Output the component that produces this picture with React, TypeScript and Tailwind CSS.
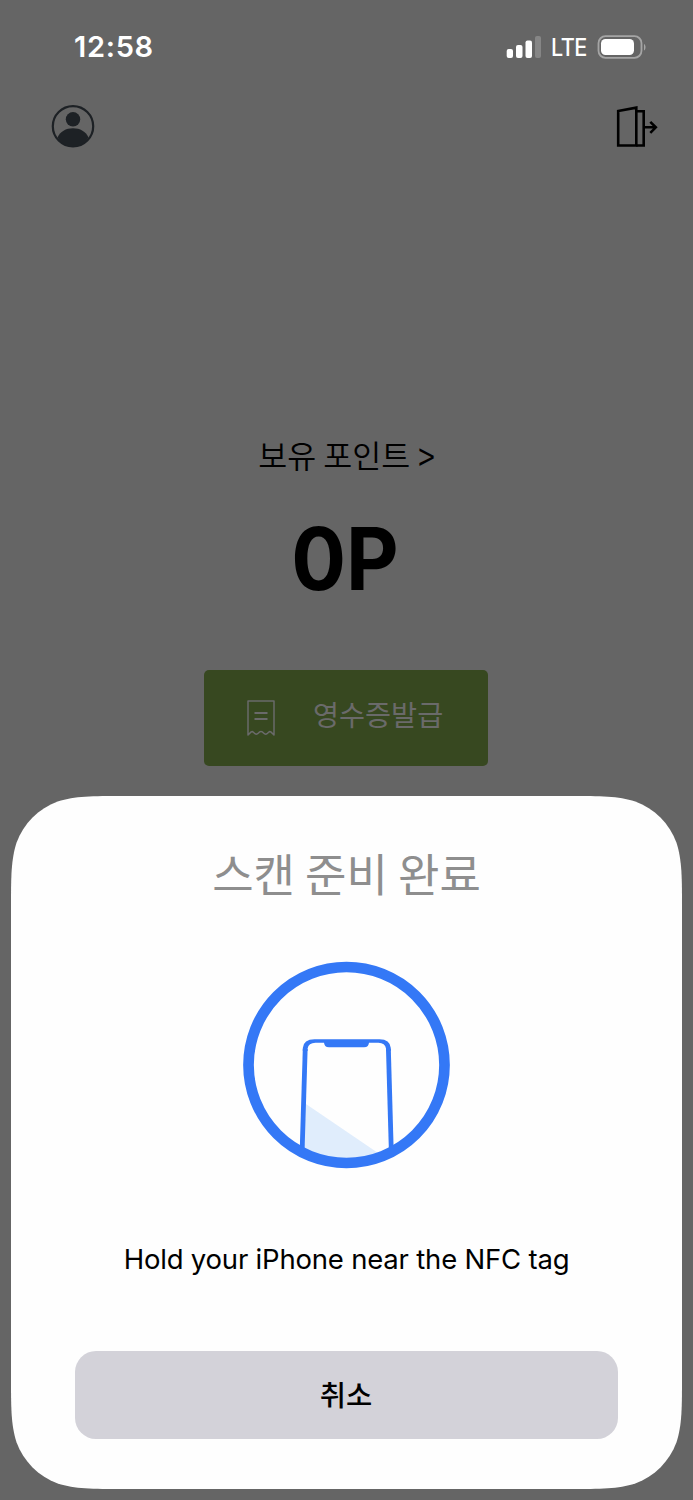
function StatusBar() {
  return (
    <header className="flex h-[93px] items-start justify-between pt-[32px] pl-[74px] pr-[47px] text-white">
      <span className="font-['Inter'] text-[29px] leading-[30px] font-semibold tracking-[0.7px]">12:58</span>
      <div className="flex h-[30px] items-center">
        <svg className="h-[24px] w-[36px]" viewBox="0 0 36 24" fill="currentColor">
          <rect x="0.700" y="14" width="6.300" height="9" rx="2" />
          <rect x="10" y="10" width="6.500" height="13" rx="2" />
          <rect x="19.500" y="5.500" width="6.500" height="17.500" rx="2" />
          <rect x="29" y="1" width="6" height="22" rx="2" opacity="0.220" />
        </svg>
        <span className="ml-[9px] w-[46px] origin-left scale-x-[0.9] pt-px font-['Inter'] text-[24px] leading-[30px] font-medium tracking-[-0.6px]">
          LTE
        </span>
        <svg className="h-[24px] w-[49px]" viewBox="0 0 49 24" fill="none">
          <rect x="1.500" y="1.200" width="43" height="21.600" rx="7" stroke="#a5a5a5" strokeWidth="1.800" />
          <rect x="4" y="4" width="33" height="16" rx="4.500" fill="#fff" />
          <path d="M47 9c2 .8 2 5.600 0 6.400z" fill="#a5a5a5" />
        </svg>
      </div>
    </header>
  );
}

function UserIcon() {
  return (
    <svg className="h-[44px] w-[44px]" viewBox="0 0 44 44" fill="#1d2125">
      <circle cx="22" cy="22.300" r="20.200" fill="none" stroke="#1d2125" strokeWidth="2.200" />
      <circle cx="22" cy="15.300" r="7.200" />
      <path d="M6.500 33.500C9 27.500 15 24.200 22 24.200S35 27.500 37.500 33.500C34 39 28.500 43 22 43S10 39 6.500 33.500Z" />
    </svg>
  );
}

function ExitIcon() {
  return (
    <svg className="h-[44px] w-[44px]" viewBox="0 0 44 44" fill="none" stroke="#000" strokeWidth="2.600">
      <path d="M3.200 7 21.300 3.600V41.500H3.200Z" />
      <path d="M21.300 7.300H28.700V41.500H21.300" />
      <path d="M29 23.300H41M35.300 17.800 40.800 23.300 35.300 28.800" />
    </svg>
  );
}

function ReceiptIcon() {
  return (
    <svg className="h-[38px] w-[30px]" viewBox="0 0 30 38" fill="none" stroke="#6a6a6a" strokeWidth="1.500">
      <path
        d="M2 36V2H28V36L24.800 32.900Q23.700 32.200 22.600 33.200L21 34.700Q19.700 35.700 18.400 34.700L16.300 32.900Q15 32 13.700 32.900L11.600 34.700Q10.300 35.700 9 34.700L7.400 33.200Q6.300 32.200 5.200 32.900Z"
        strokeLinejoin="round"
      />
      <path d="M8.500 14H21.500M8.500 20H21.500" strokeWidth="1.800" />
    </svg>
  );
}

function PhoneScanIcon() {
  return (
    <svg className="h-[208px] w-[208px]" viewBox="0.5 0 208 208" fill="none">
      <clipPath id="scan-ring">
        <circle cx="104" cy="104" r="96" />
      </clipPath>
      <g clipPath="url(#scan-ring)">
        <path d="M62 142 137 193V208H60Z" fill="#e0edfc" />
        <path d="M59.100 208 62.700 88" stroke="#3478f6" strokeWidth="4.800" />
        <path d="M149.300 208 145.900 88" stroke="#3478f6" strokeWidth="4.800" />
        <path
          d="M60.300 90V87Q61 78.500 72 78.300H137Q147.500 78.500 148.300 87V90H143.500V87.500Q142.500 82 136 81.800H73Q66 82 65.100 87.500V90Z"
          fill="#3478f6"
        />
        <path d="M81.500 79H126.500V81Q126.500 86.300 121.500 86.300H86.500Q81.500 86.300 81.500 81Z" fill="#3478f6" />
      </g>
      <circle cx="104" cy="104" r="98" stroke="#3478f6" strokeWidth="10.700" />
    </svg>
  );
}

function ScanSheet() {
  return (
    <section className="ml-[11px] flex h-[693px] w-[671px] flex-col items-center bg-[#fefefe] [clip-path:path('M113_0C80.5_0_64.3_0_46.7_5.5C27.6_12.5_12.5_27.6_5.5_46.7C0_64.3_0_80.5_0_113V580C0_612.5_0_628.7_5.5_646.3C12.5_665.4_27.6_680.5_46.7_687.5C64.3_693_80.5_693_113_693H558C590.5_693_606.7_693_624.3_687.5C643.4_680.5_658.5_665.4_665.5_646.3C671_628.7_671_612.5_671_580V113C671_80.5_671_64.3_665.5_46.7C658.5_27.6_643.4_12.5_624.3_5.5C606.7_0_590.5_0_558_0Z')]">
      <h2 className="mt-[47px] text-[45px] leading-[60px] text-[#8e8e8e]">스캔 준비 완료</h2>
      <div className="mt-[58px]">
        <PhoneScanIcon />
      </div>
      <p className="mt-[70px] font-['Inter'] text-[27.5px] leading-[40px] tracking-[-0.2px] whitespace-nowrap text-black">
        Hold your iPhone near the NFC tag
      </p>
      <button
        type="button"
        className="mt-[72px] flex h-[88px] w-[543px] items-center justify-center rounded-[21px] bg-[#d3d2d9] pr-px pb-[2px] text-[28.5px] font-medium text-black"
      >
        취소
      </button>
    </section>
  );
}

export default function App() {
  return (
    <div className="h-[1500px] w-[693px] overflow-hidden bg-[#656565] font-['Noto_Sans_CJK_KR',sans-serif]">
      <StatusBar />
      <nav className="flex h-[67px] items-start justify-between pt-[11px] pr-[34px] pl-[51px]">
        <UserIcon />
        <ExitIcon />
      </nav>
      <main className="flex h-[636px] flex-col items-center">
        <p className="mt-[273px] flex items-center text-[31.5px] leading-[40px] font-[350] text-black">
          보유 포인트
          <span className="ml-[8px] scale-y-[1.35] pt-px text-[30px]">&gt;</span>
        </p>
        <p className="mt-[35px] mr-[3px] scale-x-[0.945] font-['Inter'] text-[86px] leading-[100px] font-bold text-black">
          0P
        </p>
        <button
          type="button"
          className="mt-[61px] mr-px flex h-[96px] w-[284px] items-center rounded-[5px] bg-[#374820] pl-[42px] text-[28.3px] font-normal text-[#6a6a6a]"
        >
          <ReceiptIcon />
          <span className="ml-[37px] pb-[7px]">영수증발급</span>
        </button>
      </main>
      <ScanSheet />
    </div>
  );
}
